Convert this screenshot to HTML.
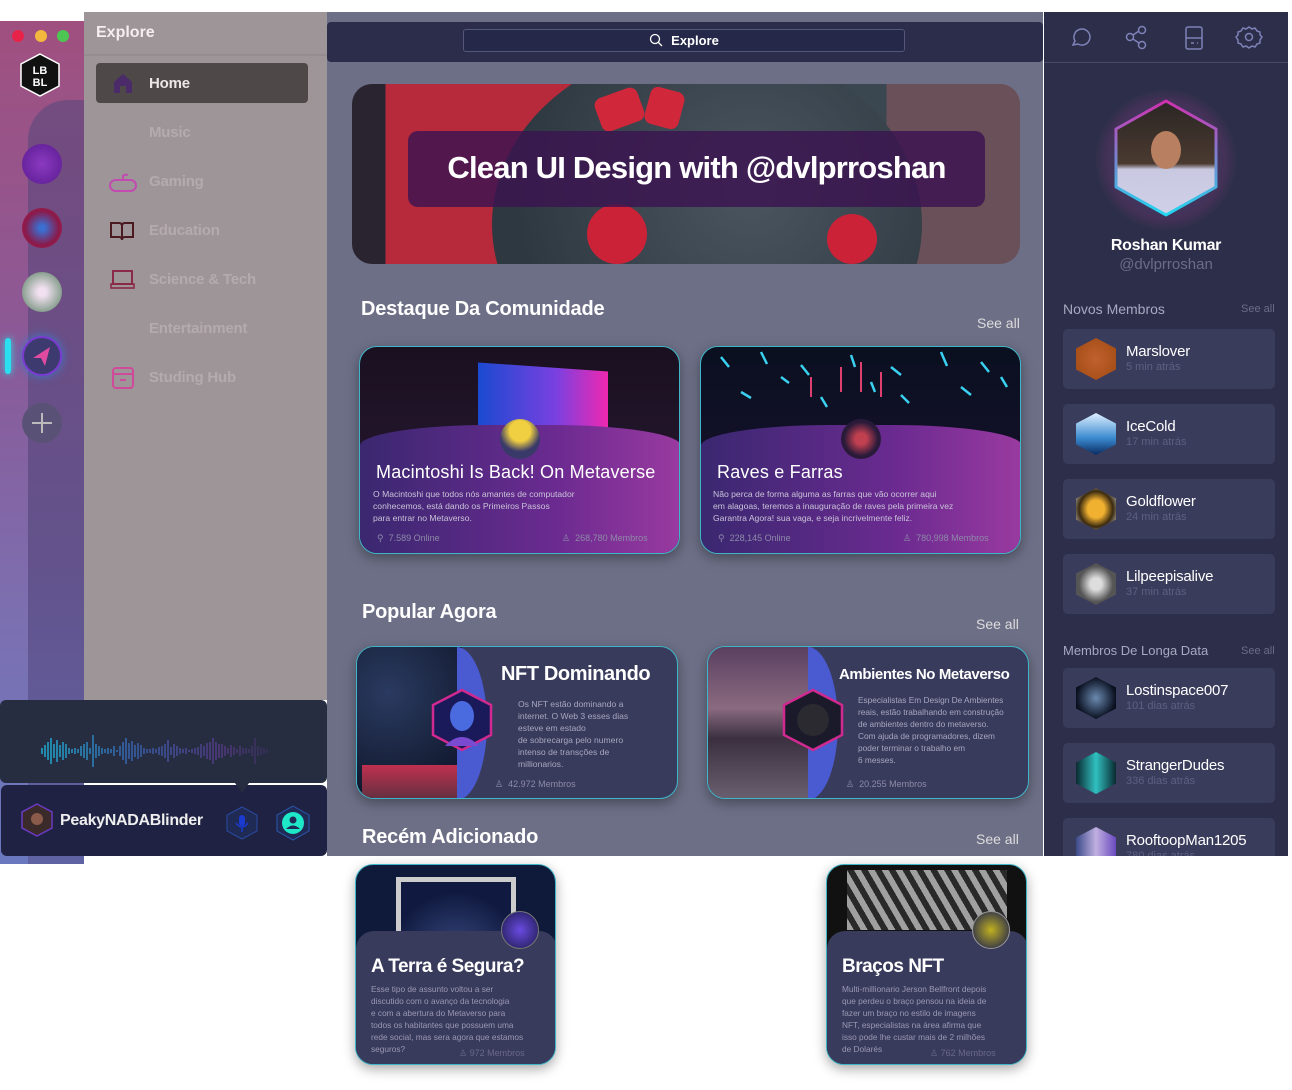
<!DOCTYPE html>
<html><head><meta charset="utf-8"><style>
*{margin:0;padding:0;box-sizing:border-box}
body{width:1292px;height:1090px;background:#fff;font-family:"Liberation Sans",sans-serif;position:relative;overflow:hidden;color:#fff}
.a{position:absolute}
.strip{left:0;top:21px;width:84px;height:843px;background:linear-gradient(180deg,#a0507f 0%,#8a5a98 40%,#7c6fb0 70%,#6a79bf 100%)}
.dot{width:12px;height:12px;border-radius:50%;top:30px}
.ic{width:40px;height:40px;border-radius:50%;left:22px}
.nav{left:84px;top:12px;width:243px;height:688px;background:#9d9597}
.nav .t{position:absolute;left:12px;top:12px;font-size:16px;font-weight:bold;color:#f4eef0}
.nitem{position:absolute;left:65px;font-size:15px;font-weight:bold;color:#b4abae;letter-spacing:-.2px}
.main{left:327px;top:12px;width:716px;height:844px;background:#6c6f86}
.top{left:327px;top:22px;width:716px;height:40px;background:#2b2d4a;border-radius:4px}
.search{left:463px;top:29px;width:442px;height:23px;border:1px solid #55577a;border-radius:3px;background:#26284a;font-size:13px;font-weight:bold;text-align:center;line-height:21px}
.h2{font-size:20px;font-weight:bold;color:#fff;letter-spacing:-.2px}
.seeall{font-size:14px;color:#ddd}
.card{border-radius:18px;overflow:hidden;box-shadow:0 4px 12px rgba(0,0,0,.35);border:1px solid #3fb6c8}
.right{left:1044px;top:12px;width:244px;height:844px;background:#2d2f4a}
.mem{left:1063px;width:212px;height:60px;background:#3a3c5c;border-radius:5px}
.mem .av{position:absolute;left:13px;top:9px;width:40px;height:42px;clip-path:polygon(50% 0,100% 25%,100% 75%,50% 100%,0 75%,0 25%);border-radius:8px}
.mem .n{position:absolute;left:63px;top:14px;font-size:15px;color:#fff;letter-spacing:-.2px}
.mem .s{position:absolute;left:63px;top:32px;font-size:11px;color:#5d6080}
.small{font-size:8.6px;color:#c9c3d8;line-height:12px;white-space:nowrap}
.meta{font-size:9px;color:#8d8aa8}
</style></head><body>

<div class="a strip"></div>
<div class="a" style="left:28px;top:100px;width:56px;height:764px;background:linear-gradient(180deg,#6a4a7e,#5c4c84 60%,#5c5c9c);border-radius:40px 0 0 0;opacity:.8"></div>
<div class="a dot" style="left:12px;background:#e8234a"></div>
<div class="a dot" style="left:35px;background:#f3b83d"></div>
<div class="a dot" style="left:57px;background:#4dc653"></div>
<svg class="a" style="left:20px;top:53px" width="40" height="44" viewBox="0 0 40 44"><polygon points="20,1 39,11 39,33 20,43 1,33 1,11" fill="#111" stroke="#fff" stroke-width="1.5"/><text x="20" y="21" font-size="11" font-weight="bold" fill="#fff" text-anchor="middle" font-family="Liberation Sans">LB</text><text x="20" y="33" font-size="11" font-weight="bold" fill="#fff" text-anchor="middle" font-family="Liberation Sans">BL</text></svg>
<div class="a ic" style="top:144px;background:radial-gradient(circle,#8a3ac0,#5a1a90)"></div>
<div class="a ic" style="top:208px;background:radial-gradient(circle,#3a6fd0 10%,#8a1a4a 60%,#b0204a)"></div>
<div class="a ic" style="top:272px;background:radial-gradient(circle,#f0e0f0 15%,#8aa090 70%)"></div>
<div class="a" style="left:5px;top:338px;width:6px;height:36px;border-radius:3px;background:#2ae0f0;box-shadow:0 0 8px #2ae0f0"></div>
<div class="a ic" style="top:336px;background:#3d3a70;border:2px solid #7a3ad0;box-shadow:0 0 10px #3a7ad0"><svg width="36" height="36" viewBox="0 0 36 36"><path d="M26 9 L9 20 L17 20 L21 28 Z" fill="#e04aa0"/></svg></div>
<div class="a ic" style="top:403px;background:#5a5276"><svg width="40" height="40"><path d="M20 10V30M10 20H30" stroke="#bbb" stroke-width="2"/></svg></div>

<div class="a nav">
<div class="t">Explore</div>
<div style="position:absolute;left:0;top:42px;width:243px;height:2px;background:#958d90"></div>
<div style="position:absolute;left:12px;top:51px;width:212px;height:40px;background:#4e4849;border-radius:4px"></div>
<svg style="position:absolute;left:28px;top:60px" width="22" height="22"><path d="M2 10 L11 2 L20 10 V21 H14 V14 H8 V21 H2Z" fill="#4a2a68"/></svg>
<div class="nitem" style="top:63px;color:#ece6e8">Home</div>
<div class="nitem" style="top:112px">Music</div>
<svg style="position:absolute;left:24px;top:160px" width="30" height="22"><rect x="2" y="8" width="26" height="11" rx="5.5" fill="none" stroke="#c24ab0" stroke-width="2"/><path d="M15 8 V4 Q17 2 20 3" stroke="#c24ab0" stroke-width="2" fill="none"/></svg>
<div class="nitem" style="top:161px">Gaming</div>
<svg style="position:absolute;left:25px;top:208px" width="26" height="22"><path d="M2 3 H10 Q13 3 13 6 V20 Q13 17 10 17 H2Z M24 3 H16 Q13 3 13 6 V20 Q13 17 16 17 H24Z" fill="none" stroke="#4a1a20" stroke-width="2"/></svg>
<div class="nitem" style="top:210px">Education</div>
<svg style="position:absolute;left:26px;top:257px" width="26" height="22"><rect x="3" y="2" width="19" height="13" fill="none" stroke="#8a2a48" stroke-width="2"/><rect x="1" y="15" width="23" height="4" fill="none" stroke="#8a2a48" stroke-width="1.6"/></svg>
<div class="nitem" style="top:259px">Science &amp; Tech</div>
<div class="nitem" style="top:308px">Entertainment</div>
<svg style="position:absolute;left:27px;top:354px" width="24" height="24"><rect x="2" y="2" width="20" height="20" rx="3" fill="none" stroke="#d04a9a" stroke-width="2"/><path d="M2 8H22M9 14H15" stroke="#d04a9a" stroke-width="2"/></svg>
<div class="nitem" style="top:357px">Studing Hub</div>
</div>

<div class="a" style="left:0;top:700px;width:327px;height:83px;background:#262d40;border-radius:6px">
<svg width="327" height="83"><defs><linearGradient id="wg" x1="0" x2="1"><stop offset="0" stop-color="#1ec0e8"/><stop offset=".4" stop-color="#3a6ac0"/><stop offset=".8" stop-color="#5a3a8a"/><stop offset="1" stop-color="#3a3060"/></linearGradient></defs>
<g stroke="url(#wg)" stroke-width="1.3">
<path d="M42 48v6M45 45v12M48 42v18M51 38v26M54 44v14M57 40v22M60 45v12M63 42v18M66 44v14M69 48v6M72 49v4M75 48v6M78 49v4M81 46v10M84 44v14M87 42v18M90 48v6M93 35v32M96 44v14M99 46v10M102 48v6M105 49v4M108 48v6M111 49v4M114 46v10M117 50v2M120 46v10M123 42v18M126 38v26M129 43v16M132 41v20M135 45v12M138 43v16M141 45v12M144 48v6M147 49v4M150 49v4M153 48v6M156 49v4M159 47v8M162 46v10M165 44v14M168 40v22M171 47v8M174 44v14M177 46v10M180 48v6M183 49v4M186 48v6M189 50v2M192 49v4M195 48v6M198 47v8M201 44v14M204 46v10M207 43v16M210 42v18M213 38v26M216 42v18M219 44v14M222 44v14M225 46v10M228 48v6M231 45v12M234 47v8M237 49v4M240 46v10M243 48v6M246 48v6M249 49v4M252 46v10M255 38v26M258 46v10M261 47v8M264 48v6M267 49v4"/></g></svg></div>
<div class="a" style="left:1px;top:785px;width:326px;height:71px;background:#1f2243;border-radius:6px"></div>
<div class="a" style="left:235px;top:783px;width:14px;height:10px;background:#262d40;clip-path:polygon(0 0,100% 0,50% 100%)"></div>
<svg class="a" style="left:21px;top:803px" width="32" height="34"><polygon points="16,1 31,9 31,25 16,33 1,25 1,9" fill="#3a2a2a" stroke="#6a3ac0" stroke-width="1.5"/><circle cx="16" cy="16" r="6" fill="#8a5a4a"/></svg>
<div class="a" style="left:60px;top:812px;font-size:16px;font-weight:bold;color:#eee;letter-spacing:-.3px">PeakyNADABlinder</div>
<svg class="a" style="left:226px;top:806px" width="32" height="34"><polygon points="16,1 31,9 31,25 16,33 1,25 1,9" fill="#1f2a55" stroke="#2a4aa0"/><rect x="13" y="9" width="6" height="11" rx="3" fill="#1a3ad0"/><path d="M10 17 Q16 25 22 17 M16 21v5" stroke="#1a3ad0" fill="none" stroke-width="1.5"/></svg>
<svg class="a" style="left:276px;top:805px" width="34" height="36"><polygon points="17,1 33,10 33,26 17,35 1,26 1,10" fill="#1f2a55" stroke="#2a5ab0"/><circle cx="17" cy="18" r="11" fill="#1ee8c8"/><circle cx="17" cy="15" r="3.5" fill="#1f2a55"/><path d="M10 24 Q17 17 24 24" fill="#1f2a55"/></svg>

<div class="a main"></div>
<div class="a top"></div>
<div class="a search"><svg width="14" height="14" style="vertical-align:-2px;margin-right:8px"><circle cx="6" cy="6" r="4.5" fill="none" stroke="#fff" stroke-width="1.3"/><path d="M9.5 9.5L13 13" stroke="#fff" stroke-width="1.3"/></svg>Explore</div>

<div class="a" style="left:352px;top:84px;width:668px;height:180px;border-radius:20px;overflow:hidden;background:linear-gradient(90deg,#2a2430 0 5%,#b62a3c 5% 38%,#3a4650 38% 80%,#6a5058 80%)">
<div style="position:absolute;left:140px;top:-40px;width:430px;height:360px;border-radius:50%;background:radial-gradient(circle at 60% 40%,#4a5560,#2e3840 70%)"></div>
<div style="position:absolute;left:245px;top:8px;width:45px;height:35px;background:#d0283a;border-radius:8px;transform:rotate(-20deg)"></div>
<div style="position:absolute;left:295px;top:5px;width:35px;height:38px;background:#d0283a;border-radius:8px;transform:rotate(15deg)"></div>
<div style="position:absolute;left:235px;top:120px;width:60px;height:60px;background:#cc2238;border-radius:50%"></div>
<div style="position:absolute;left:475px;top:130px;width:50px;height:50px;background:#cc2238;border-radius:50%"></div>
<div style="position:absolute;left:56px;top:47px;width:577px;height:76px;background:rgba(60,20,80,.82);border-radius:10px;font-size:31px;font-weight:bold;text-align:center;line-height:74px;color:#fff;letter-spacing:-.8px">Clean UI Design with @dvlprroshan</div>
</div>

<div class="a h2" style="left:361px;top:298px">Destaque Da Comunidade</div>
<div class="a seeall" style="left:977px;top:315px">See all</div>

<div class="a card" style="left:359px;top:346px;width:321px;height:208px;background:linear-gradient(180deg,#1a1020,#2a1a35)">
<div style="position:absolute;left:118px;top:20px;width:130px;height:90px;background:linear-gradient(90deg,#1a4ad0,#7a40e0 60%,#f028b0);transform:skewY(4deg)"></div>
<div style="position:absolute;left:0;top:78px;width:321px;height:130px;background:linear-gradient(90deg,#3a2870,#6a2a90 60%,#9a3aa0);border-radius:40% 40% 0 0/16% 16% 0 0"></div>
<div style="position:absolute;left:140px;top:72px;width:40px;height:40px;border-radius:50%;background:radial-gradient(circle at 50% 30%,#f0d040 30%,#3a3a6a 60%)"></div>
<div style="position:absolute;left:16px;top:115px;font-size:18px;color:#fff;white-space:nowrap;letter-spacing:.2px">Macintoshi Is Back! On Metaverse</div>
<div class="small" style="position:absolute;left:13px;top:141px">O Macintoshi que todos nós amantes de computador<br>conhecemos, está dando os Primeiros Passos<br>para entrar no Metaverso.</div>
<div class="meta" style="position:absolute;left:17px;top:186px">⚲ &nbsp;7.589 Online</div>
<div class="meta" style="position:absolute;left:202px;top:186px">♙ &nbsp;268,780 Membros</div>
</div>
<div class="a card" style="left:700px;top:346px;width:321px;height:208px;background:linear-gradient(180deg,#0a1020,#1a1030)">
<svg width="321" height="100" style="position:absolute;left:0;top:0"><g stroke="#3ad0f0" stroke-width="2.5"><path d="M20 10l8 10M60 5l6 12M100 18l8 10M150 8l4 12M190 20l10 8M240 5l6 14M280 15l8 10M40 45l10 6M120 50l6 10M200 48l8 8M260 40l10 8M300 30l6 10M80 30l8 6M170 35l4 10"/></g><g stroke="#e04070" stroke-width="2"><path d="M140 20v25M160 15v30M180 25v25M110 30v20"/></g></svg>
<div style="position:absolute;left:0;top:78px;width:321px;height:130px;background:linear-gradient(90deg,#3a2870,#6a2a90 60%,#9a3aa0);border-radius:40% 40% 0 0/16% 16% 0 0"></div>
<div style="position:absolute;left:140px;top:72px;width:40px;height:40px;border-radius:50%;background:radial-gradient(circle,#c04050 20%,#2a1a3a 60%)"></div>
<div style="position:absolute;left:16px;top:115px;font-size:18px;color:#fff;letter-spacing:.2px">Raves e Farras</div>
<div class="small" style="position:absolute;left:12px;top:141px">Não perca de forma alguma as farras que vão ocorrer aqui<br>em alagoas, teremos a inauguração de raves pela primeira vez<br>Garantra Agora! sua vaga, e seja incrivelmente feliz.</div>
<div class="meta" style="position:absolute;left:17px;top:186px">⚲ &nbsp;228,145 Online</div>
<div class="meta" style="position:absolute;left:202px;top:186px">♙ &nbsp;780,998 Membros</div>
</div>

<div class="a h2" style="left:362px;top:601px">Popular Agora</div>
<div class="a seeall" style="left:976px;top:616px">See all</div>

<div class="a card" style="left:356px;top:646px;width:322px;height:153px;background:#393b5c">
<div style="position:absolute;left:0;top:0;width:105px;height:153px;background:radial-gradient(circle at 30% 30%,#2a3a60,#0a1020);"></div>
<div style="position:absolute;left:5px;top:118px;width:95px;height:35px;background:linear-gradient(#c03050,#603040)"></div>
<div style="position:absolute;left:100px;top:0;width:30px;height:153px;background:#4a5ad0;border-radius:0 100% 100% 0/0 50% 50% 0"></div>
<svg style="position:absolute;left:74px;top:41px" width="62" height="64"><polygon points="31,2 60,17 60,47 31,62 2,47 2,17" fill="#1a1a5a" stroke="#d02a90" stroke-width="2.5"/><ellipse cx="31" cy="28" rx="12" ry="15" fill="#4a6ae0"/><path d="M14 58 Q31 40 48 58" fill="#7a4ad0"/></svg>
<div style="position:absolute;left:144px;top:16px;font-size:20px;font-weight:bold;letter-spacing:-.4px">NFT Dominando</div>
<div class="small" style="position:absolute;left:161px;top:51px;color:#a8a6c0">Os NFT estão dominando a<br>internet. O Web 3 esses dias<br>esteve em estado<br>de sobrecarga pelo numero<br>intenso de transções de<br>millionarios.</div>
<div class="meta" style="position:absolute;left:138px;top:132px">♙ &nbsp;42.972 Membros</div>
</div>
<div class="a card" style="left:707px;top:646px;width:322px;height:153px;background:#393b5c">
<div style="position:absolute;left:0;top:0;width:105px;height:153px;background:linear-gradient(180deg,#5a4060,#8a6a80 40%,#3a3040 60%,#6a6070)"></div>
<div style="position:absolute;left:100px;top:0;width:30px;height:153px;background:#4a5ad0;border-radius:0 100% 100% 0/0 50% 50% 0"></div>
<svg style="position:absolute;left:74px;top:41px" width="62" height="64"><polygon points="31,2 60,17 60,47 31,62 2,47 2,17" fill="#1a1a2a" stroke="#d02a90" stroke-width="2.5"/><circle cx="31" cy="32" r="16" fill="#2a2a30"/></svg>
<div style="position:absolute;left:131px;top:19px;font-size:15px;font-weight:bold;white-space:nowrap;letter-spacing:-.4px">Ambientes No Metaverso</div>
<div class="small" style="position:absolute;left:150px;top:47px;color:#a8a6c0;font-size:8.3px">Especialistas Em Design De Ambientes<br>reais, estão trabalhando em construção<br>de ambientes dentro do metaverso.<br>Com ajuda de programadores, dizem<br>poder terminar o trabalho em<br>6 messes.</div>
<div class="meta" style="position:absolute;left:138px;top:132px">♙ &nbsp;20.255 Membros</div>
</div>

<div class="a h2" style="left:362px;top:826px">Recém Adicionado</div>
<div class="a seeall" style="left:976px;top:831px">See all</div>

<div class="a card" style="left:355px;top:864px;width:201px;height:201px;background:#0f1a3a">
<div style="position:absolute;left:40px;top:12px;width:120px;height:80px;border:5px solid #ccc;border-bottom:none;background:radial-gradient(circle at 50% 100%,#3a4a80,#101a40 70%)"></div>
<div style="position:absolute;left:0;top:66px;width:201px;height:135px;background:#393b5c;border-radius:18px 18px 0 0"></div>
<div style="position:absolute;left:145px;top:46px;width:38px;height:38px;border-radius:50%;background:radial-gradient(#6a4ae0,#1a1a4a);border:1px solid #777"></div>
<div style="position:absolute;left:15px;top:91px;font-size:19px;font-weight:bold;letter-spacing:-.5px">A Terra é Segura?</div>
<div class="small" style="position:absolute;left:15px;top:118px;color:#9a98b4;font-size:8.3px">Esse tipo de assunto voltou a ser<br>discutido com o avanço da tecnologia<br>e com a abertura do Metaverso para<br>todos os habitantes que possuem uma<br>rede social, mas sera agora que estamos<br>seguros?</div>
<div class="meta" style="position:absolute;left:103px;top:183px;color:#6a6888">♙ 972 Membros</div>
</div>
<div class="a card" style="left:826px;top:864px;width:201px;height:201px;background:#111">
<div style="position:absolute;left:20px;top:5px;width:160px;height:60px;background:repeating-linear-gradient(60deg,#ddd 0 6px,#333 6px 12px);opacity:.7"></div>
<div style="position:absolute;left:0;top:66px;width:201px;height:135px;background:#393b5c;border-radius:18px 18px 0 0"></div>
<div style="position:absolute;left:145px;top:46px;width:38px;height:38px;border-radius:50%;background:radial-gradient(#c0b020,#444 70%);border:1px solid #999"></div>
<div style="position:absolute;left:15px;top:91px;font-size:19px;font-weight:bold;letter-spacing:-.5px">Braços NFT</div>
<div class="small" style="position:absolute;left:15px;top:118px;color:#9a98b4;font-size:8.3px">Multi-millionario Jerson Bellfront depois<br>que perdeu o braço pensou na ideia de<br>fazer um braço no estilo de imagens<br>NFT, especialistas na área afirma que<br>isso pode lhe custar mais de 2 milhões<br>de Dolarés</div>
<div class="meta" style="position:absolute;left:103px;top:183px;color:#6a6888">♙ 762 Membros</div>
</div>

<div class="a right"></div>
<div class="a" style="left:1044px;top:62px;width:244px;height:1px;background:#474968"></div>
<svg class="a" style="left:1070px;top:25px" width="200" height="26" fill="none" stroke="#7f82b8" stroke-width="1.5">
<path d="M3 20 L5 16 A8 8 0 1 1 8 19 Z"/>
<circle cx="60" cy="12" r="3.5"/><circle cx="72" cy="5" r="3.5"/><circle cx="72" cy="20" r="3.5"/><path d="M63 10l6-4M63 14l6 4"/>
<rect x="116" y="2" width="16" height="22" rx="2"/><path d="M116 13h16M121 18h3M127 18h1"/>
<circle cx="179" cy="12" r="3.5"/><path d="M179 2l3 2 3-1 2 3 3 1 0 3 2 2-2 3 0 3-3 1-2 3-3-1-3 2-3-2-3 1-2-3-3-1 0-3-2-3 2-2 0-3 3-1 2-3 3 1z"/>
</svg>
<div class="a" style="left:1096px;top:90px;width:140px;height:140px;border-radius:50%;background:radial-gradient(circle,rgba(60,120,220,.35),rgba(200,60,160,.15) 60%,transparent 72%)"></div>
<svg class="a" style="left:1112px;top:98px" width="108" height="120"><defs><linearGradient id="hg" x1="0" y1="0" x2="0" y2="1"><stop offset="0" stop-color="#d030b0"/><stop offset="1" stop-color="#20d8f0"/></linearGradient><linearGradient id="ph" x1="0" y1="0" x2="0" y2="1"><stop offset="0" stop-color="#2a2624"/><stop offset=".55" stop-color="#4a3a30"/><stop offset=".6" stop-color="#c8c8e0"/><stop offset="1" stop-color="#d0d0e8"/></linearGradient></defs><polygon points="54,3 104,31 104,89 54,117 4,89 4,31" fill="url(#ph)" stroke="url(#hg)" stroke-width="3" stroke-linejoin="round"/><ellipse cx="54" cy="52" rx="15" ry="19" fill="#b88060"/></svg>
<div class="a" style="left:1044px;top:237px;width:244px;text-align:center;font-size:16px;font-weight:bold;letter-spacing:-.3px">Roshan Kumar</div>
<div class="a" style="left:1044px;top:256px;width:244px;text-align:center;font-size:15px;color:#6a6c88">@dvlprroshan</div>
<div class="a" style="left:1063px;top:301px;font-size:14px;color:#a8a8c0">Novos Membros</div>
<div class="a" style="left:1241px;top:303px;font-size:11px;color:#6a6c88">See all</div>
<div class="a mem" style="top:329px"><div class="av" style="background:radial-gradient(#c06030,#a04a10)"></div><div class="n">Marslover</div><div class="s">5 min atrás</div></div>
<div class="a mem" style="top:404px"><div class="av" style="background:linear-gradient(#e0f0ff,#3a8ad0 60%,#0a2a60)"></div><div class="n">IceCold</div><div class="s">17 min atrás</div></div>
<div class="a mem" style="top:479px"><div class="av" style="background:radial-gradient(#f0b030 30%,#3a2a10 60%,#eee)"></div><div class="n">Goldflower</div><div class="s">24 min atrás</div></div>
<div class="a mem" style="top:554px"><div class="av" style="background:radial-gradient(#ddd 20%,#555 60%)"></div><div class="n">Lilpeepisalive</div><div class="s">37 min atrás</div></div>
<div class="a" style="left:1063px;top:643px;font-size:13px;color:#a8a8c0">Membros De Longa Data</div>
<div class="a" style="left:1241px;top:645px;font-size:11px;color:#6a6c88">See all</div>
<div class="a mem" style="top:668px"><div class="av" style="background:radial-gradient(#6a8ab0,#0a1020 70%)"></div><div class="n">Lostinspace007</div><div class="s">101 dias atrás</div></div>
<div class="a mem" style="top:743px"><div class="av" style="background:linear-gradient(90deg,#0a2a30,#30c0c0 50%,#0a2a30)"></div><div class="n">StrangerDudes</div><div class="s">336 dias atrás</div></div>
<div class="a" style="left:1063px;top:818px;width:212px;height:38px;overflow:hidden"><div class="a mem" style="left:0;top:0"><div class="av" style="background:linear-gradient(90deg,#3a4a8a,#c0b0e0,#6a4ac0)"></div><div class="n">RooftoopMan1205</div><div class="s">780 dias atrás</div></div></div>
</body></html>
